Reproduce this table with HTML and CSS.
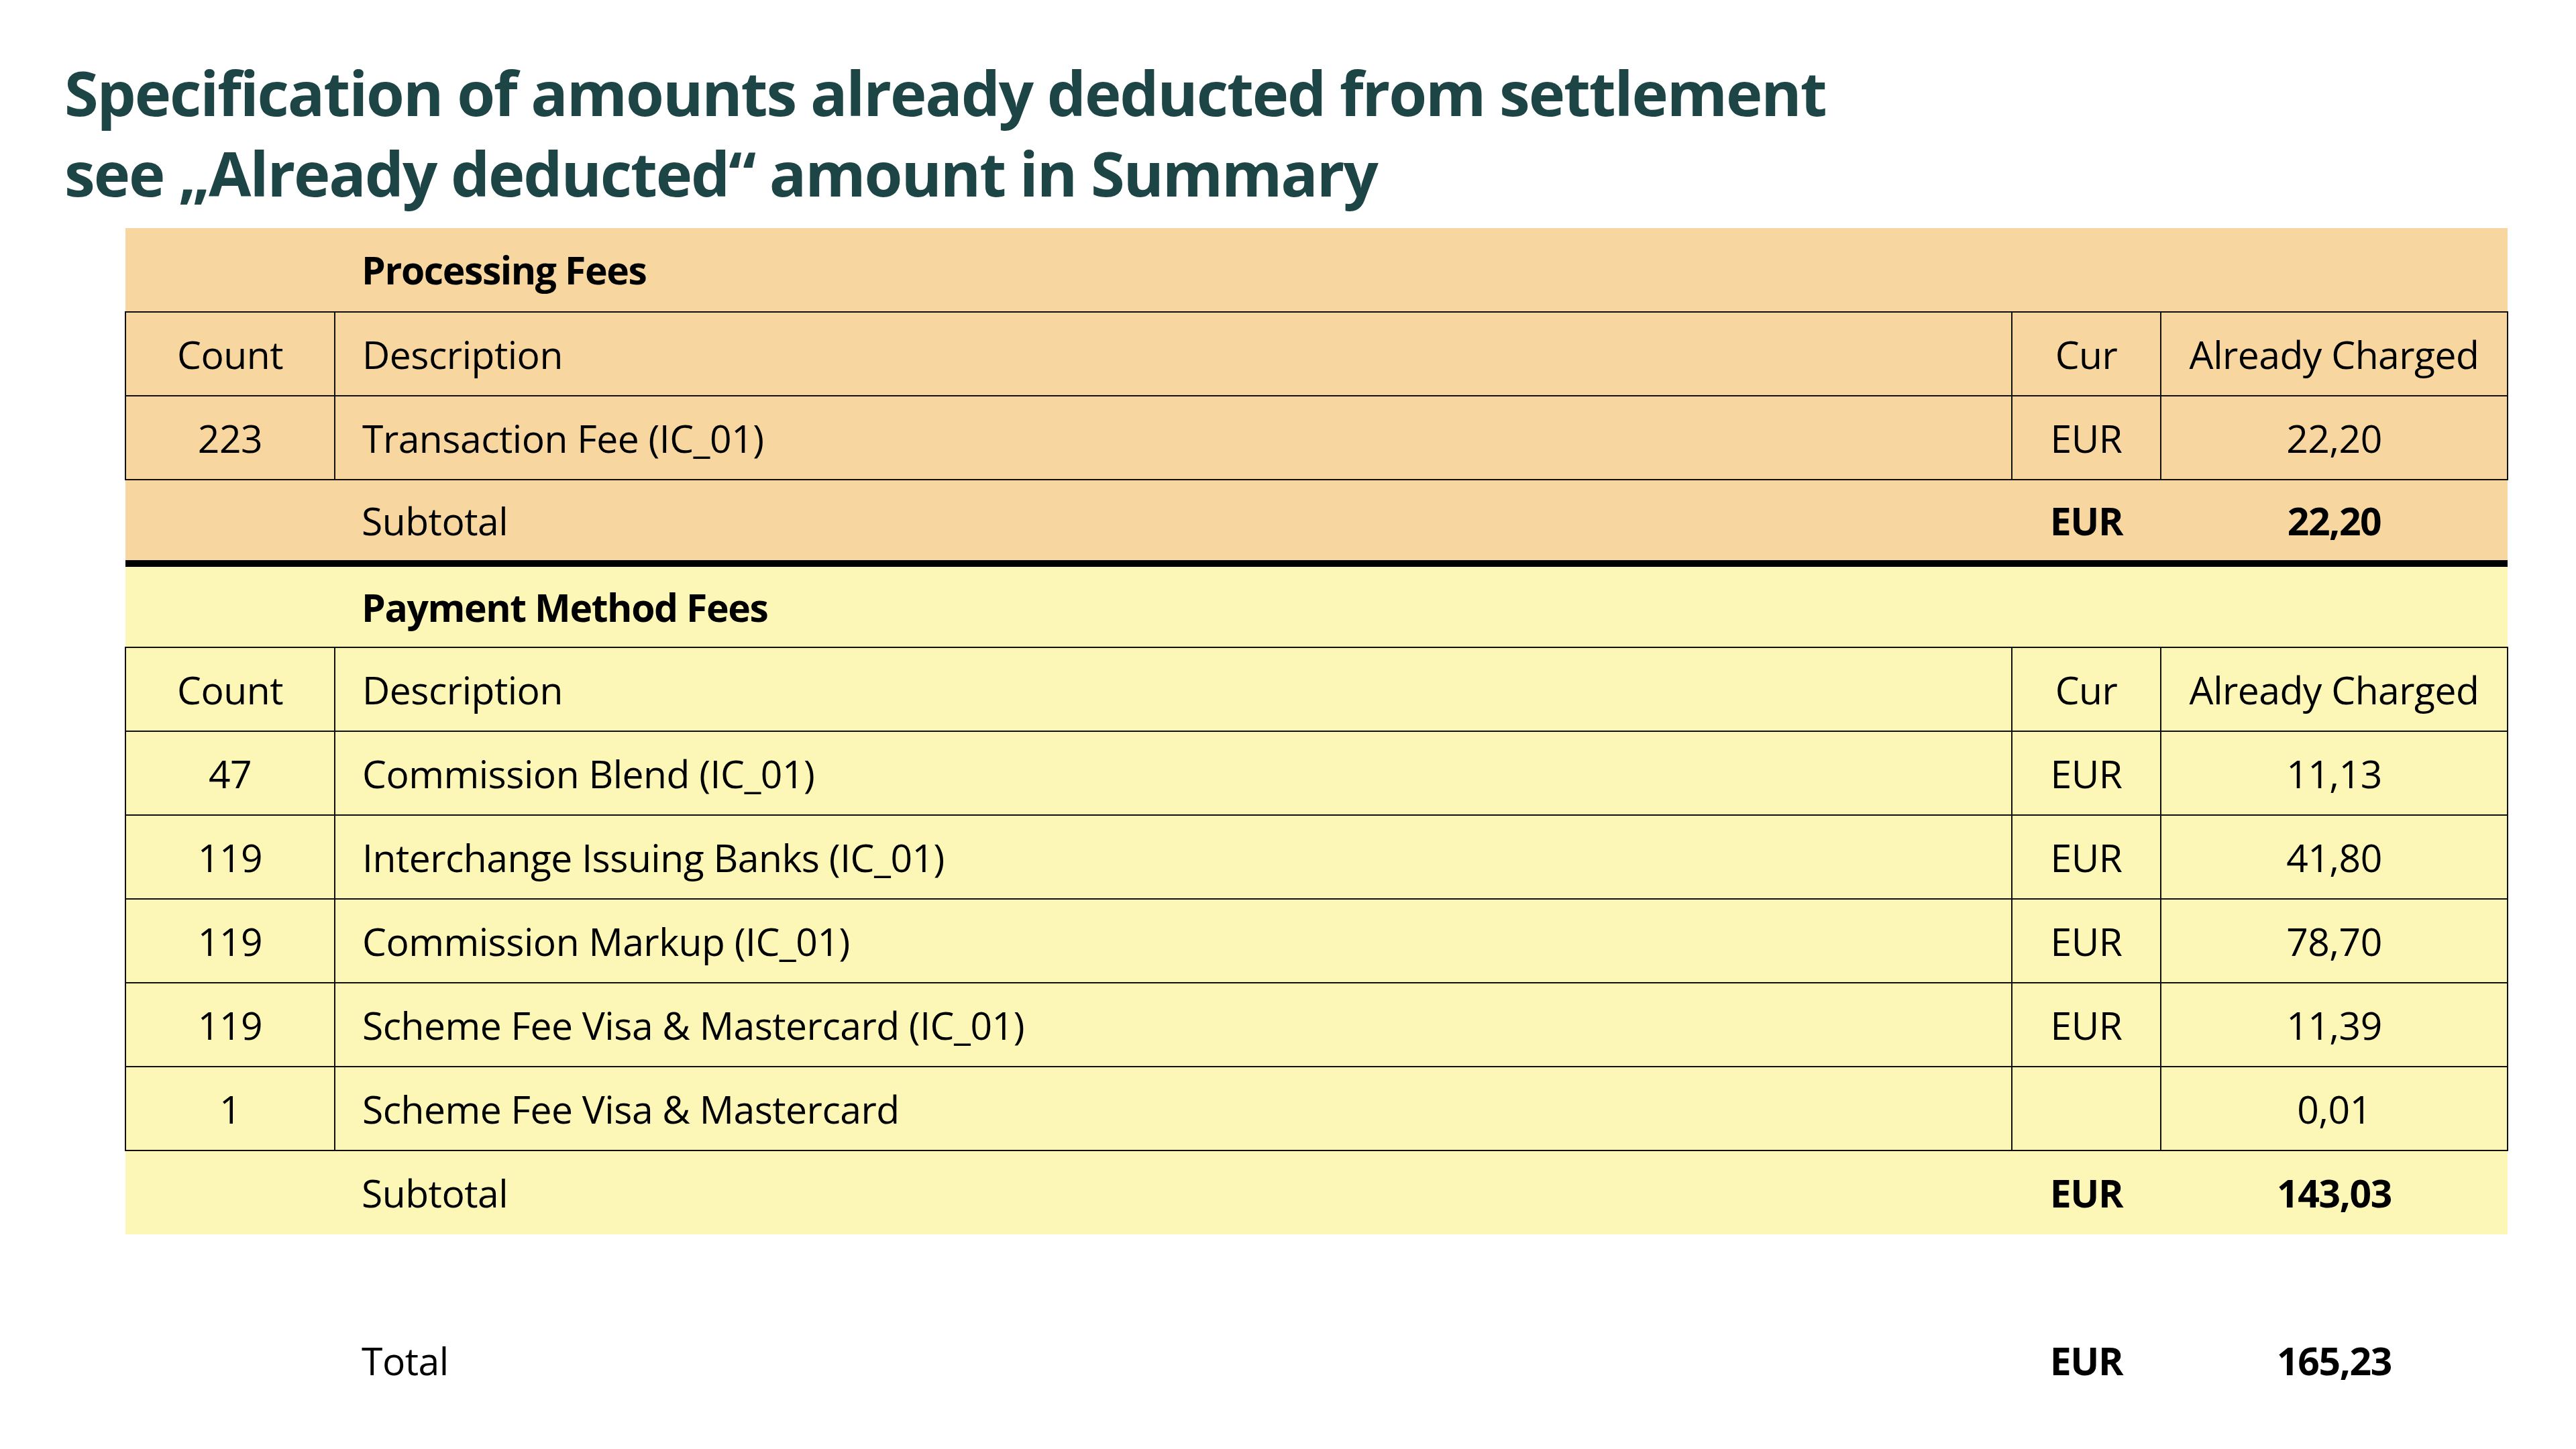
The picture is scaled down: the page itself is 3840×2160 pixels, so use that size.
FILE: index.html
```html
<!DOCTYPE html>
<html lang="en">
<head>
<meta charset="utf-8">
<title>Already deducted amounts</title>
<link rel="stylesheet" href="styles.css">
</head>
<body>
<main class="page">
  <h1 class="title">Specification of amounts already deducted from settlement<br>see „Already deducted“ amount in Summary</h1>
  <table class="fees">
    <colgroup>
      <col class="col-count">
      <col class="col-desc">
      <col class="col-cur">
      <col class="col-amt">
    </colgroup>
    <tbody class="section processing">
      <tr class="sec-title"><td></td><td class="desc strong">Processing Fees</td><td></td><td></td></tr>
      <tr class="grid"><td class="center">Count</td><td class="desc">Description</td><td class="center">Cur</td><td class="center">Already Charged</td></tr>
      <tr class="grid"><td class="center">223</td><td class="desc">Transaction Fee (IC_01)</td><td class="center">EUR</td><td class="center">22,20</td></tr>
      <tr class="subtotal divider"><td></td><td class="desc">Subtotal</td><td class="center strong">EUR</td><td class="center strong">22,20</td></tr>
    </tbody>
    <tbody class="section payment">
      <tr class="sec-title"><td></td><td class="desc strong">Payment Method Fees</td><td></td><td></td></tr>
      <tr class="grid"><td class="center">Count</td><td class="desc">Description</td><td class="center">Cur</td><td class="center">Already Charged</td></tr>
      <tr class="grid"><td class="center">47</td><td class="desc">Commission Blend (IC_01)</td><td class="center">EUR</td><td class="center">11,13</td></tr>
      <tr class="grid"><td class="center">119</td><td class="desc">Interchange Issuing Banks (IC_01)</td><td class="center">EUR</td><td class="center">41,80</td></tr>
      <tr class="grid"><td class="center">119</td><td class="desc">Commission Markup (IC_01)</td><td class="center">EUR</td><td class="center">78,70</td></tr>
      <tr class="grid"><td class="center">119</td><td class="desc">Scheme Fee Visa &amp; Mastercard (IC_01)</td><td class="center">EUR</td><td class="center">11,39</td></tr>
      <tr class="grid"><td class="center">1</td><td class="desc">Scheme Fee Visa &amp; Mastercard</td><td class="center"></td><td class="center">0,01</td></tr>
      <tr class="subtotal"><td></td><td class="desc">Subtotal</td><td class="center strong">EUR</td><td class="center strong">143,03</td></tr>
    </tbody>
    <tbody class="section totals">
      <tr class="spacer"><td></td><td></td><td></td><td></td></tr>
      <tr class="total"><td></td><td class="desc">Total</td><td class="center strong">EUR</td><td class="center strong">165,23</td></tr>
    </tbody>
  </table>
</main>
</body>
</html>
```

FILE: styles.css
```css
html, body {
  margin: 0;
  padding: 0;
  background: #ffffff;
}

body {
  font-family: "Open Sans", "Noto Sans", "Liberation Sans", sans-serif;
  color: #000000;
}

.page {
  padding: 78px 0 0 96px;
}

.title {
  margin: 0;
  font-size: 92px;
  line-height: 120px;
  font-weight: 700;
  color: #1d4546;
  letter-spacing: -2.1px;
}

.fees {
  margin: 22px 0 0 90px;
  width: 3551px;
  table-layout: fixed;
  border-collapse: collapse;
  font-size: 57px;
  letter-spacing: -0.5px;
}

.col-count { width: 312px; }
.col-desc { width: 2500px; }
.col-cur { width: 222px; }
.col-amt { width: 517px; }

.fees tr {
  height: 125px;
}

.fees td {
  padding: 0;
  vertical-align: middle;
  white-space: nowrap;
}

.processing tr { background: #f7d79f; }
.payment tr { background: #fcf6b7; }

.grid td {
  border: 2px solid #111111;
}

.divider td {
  border-bottom: 10px solid #000000;
}

.desc {
  text-align: left;
  padding-left: 40px !important;
}

.center {
  text-align: center;
}

.strong {
  font-weight: 700;
  letter-spacing: -1.4px;
}
```
